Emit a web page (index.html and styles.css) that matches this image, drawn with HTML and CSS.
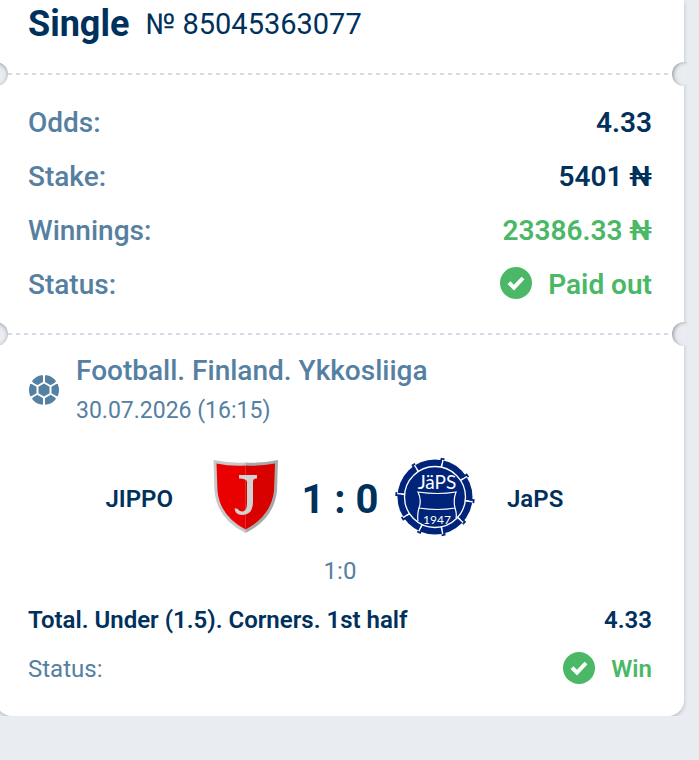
FILE: index.html
```html
<!DOCTYPE html>
<html lang="en">
<head>
<meta charset="utf-8">
<meta name="viewport" content="width=device-width, initial-scale=1">
<title>Bet slip</title>
<link rel="stylesheet" href="styles.css">
</head>
<body>
<main class="ticket">
  <header class="ticket-head">
    <h1 class="kind">Single</h1>
    <span class="number">№ 85045363077</span>
  </header>
  <div class="tear"></div>
  <dl class="summary">
    <div class="row"><dt>Odds:</dt><dd>4.33</dd></div>
    <div class="row"><dt>Stake:</dt><dd>5401 ₦</dd></div>
    <div class="row"><dt>Winnings:</dt><dd class="positive">23386.33 ₦</dd></div>
    <div class="row"><dt>Status:</dt><dd class="positive">
      <svg class="check" viewBox="0 0 32 32" aria-hidden="true"><circle cx="16" cy="16" r="16"/><path d="M9 15.700l5 5L23 11"/></svg>
      Paid out</dd></div>
  </dl>
  <div class="tear"></div>
  <section class="event">
    <div class="league">
      <svg class="sport" viewBox="0 0 32 32" aria-hidden="true">
        <circle class="ball" cx="16" cy="16" r="15"/>
        <path class="seam" d="M16 8.500l6.500 3.750v7.500L16 23.500l-6.500-3.750v-7.500zM16 8.500V0M22.500 12.250L30 8M22.500 19.750L30 24M16 23.500V32M9.500 19.750L2 24M9.500 12.250L2 8"/>
        <path class="dent" d="M14 0h4l-2 4zM14 32h4l-2-4zM3 5.500l-2 3.700 5 1zM29 5.500l2 3.700-5 1zM3 26.500l-2-3.700 5-1zM29 26.500l2-3.700-5-1z"/>
      </svg>
      <div>
        <h2 class="league-name">Football. Finland. Ykkosliiga</h2>
        <time class="date">30.07.2026 (16:15)</time>
      </div>
    </div>
    <div class="match">
      <div class="team home">
        <span>JIPPO</span>
        <svg class="crest" viewBox="0 0 80 80" aria-hidden="true">
          <path fill="#c8c8c8" d="M8.500 3Q25 6.500 40.500 5.500V76Q12 62 9.500 34z"/>
          <path fill="#a9a9a9" d="M73 3Q56 6.500 40.500 5.500V76Q69 62 72 34z"/>
          <path fill="#e90000" d="M11.500 6.500Q26 9.500 40.500 8.500V72.500Q15 59 12.500 34z"/>
          <path fill="#d90000" d="M70 6.500Q55 9.500 40.500 8.500V72.500Q66 59 69 34z"/>
          <path fill="#d2d2d2" d="M34 18H52V21.500Q48 21.500 48 25V45Q48 58 37 58Q30 58 29.500 51.500H32Q35 55 38 54.500Q42 54 42 46V25Q42 21.500 34 21.500z"/>
        </svg>
      </div>
      <strong class="score">1 : 0</strong>
      <div class="team away">
        <svg class="crest" viewBox="0 0 80 80" aria-hidden="true">
          <defs>
            <g id="tab">
              <path d="M40 10V0" stroke="#fff" stroke-width="1.600"/>
              <path d="M38.400 6V1.200H41.500" fill="none" stroke="#00247a" stroke-width="1.800"/>
            </g>
          </defs>
          <circle cx="40" cy="40" r="37.500" fill="#00247a"/>
          <circle cx="40" cy="40" r="30.500" fill="none" stroke="#fff" stroke-width="1.300"/>
          <use href="#tab" transform="rotate(12 40 40)"/>
          <use href="#tab" transform="rotate(57 40 40)"/>
          <use href="#tab" transform="rotate(97 40 40)"/>
          <use href="#tab" transform="rotate(132 40 40)"/>
          <use href="#tab" transform="rotate(168 40 40)"/>
          <use href="#tab" transform="rotate(205 40 40)"/>
          <use href="#tab" transform="rotate(237 40 40)"/>
          <use href="#tab" transform="rotate(275 40 40)"/>
          <use href="#tab" transform="rotate(327 40 40)"/>
          <path d="M23 35Q43 38 61 35Q58 43 60 51Q43 54 24 51Q27 43 23 35zM24 51Q22 57 23 64M60 51Q62 57 61 61" fill="none" stroke="#fff" stroke-width="1.200"/>
          <text class="crest-name" x="42" y="32">JäPS</text>
          <text class="crest-year" x="42" y="67">1947</text>
        </svg>
        <span>JaPS</span>
      </div>
    </div>
    <p class="period">1:0</p>
    <div class="bet"><strong>Total. Under (1.5). Corners. 1st half</strong><strong>4.33</strong></div>
    <div class="bet"><span class="label">Status:</span><strong class="outcome positive">
      <svg class="check" viewBox="0 0 32 32" aria-hidden="true"><circle cx="16" cy="16" r="16"/><path d="M9 15.700l5 5L23 11"/></svg>
      Win</strong></div>
  </section>
</main>
</body>
</html>
```
FILE: styles.css
```css
* { box-sizing: border-box; }
body {
  margin: 0;
  background: #e9edf2;
  color: #00315c;
  font-family: Roboto, "Liberation Sans", sans-serif;
  font-size: 24px;
  overflow-x: hidden;
}
h1, h2, p, dl, dd { margin: 0; }
strong { font-weight: 600; }
.ticket {
  margin: 0 15px 0 -4px;
  background: #fff;
  border-radius: 0 0 16px 16px;
  box-shadow: 0 2px 4px #0003;
}
.ticket-head {
  display: flex;
  align-items: center;
  gap: 16px;
  height: 62px;
  padding: 0 32px 14px;
}
.kind { font-size: 36px; line-height: 48px; font-weight: 700; }
.number { font-size: 29px; line-height: 48px; }
.tear {
  display: flex;
  justify-content: space-between;
  align-items: center;
  height: 24px;
  margin: 0 -12px;
  background: repeating-linear-gradient(90deg, #d9dbea 0 4px, #fff 4px 8px) 24px 11px / calc(100% - 48px) 2px no-repeat;
}
.tear::before, .tear::after {
  content: "";
  width: 24px;
  height: 24px;
  border-radius: 12px;
  background: #e9edf2;
  box-shadow: inset 0 1px 4px #0005;
}
.tear::after {
  box-shadow: inset 3px 1px 4px -2px #0006;
  clip-path: inset(0 9px 0 0);
}
.summary { padding: 9px 32px 11px; }
.row {
  display: flex;
  justify-content: space-between;
  align-items: center;
  height: 54px;
  font-size: 28px;
}
dt { color: #5580a1; font-weight: 500; }
dd { font-weight: 600; display: flex; align-items: center; gap: 16px; }
.positive { color: #4ab866; }
.check { width: 32px; height: 32px; margin-bottom: 2px; fill: currentColor; }
.check path { fill: none; stroke: #fff; stroke-width: 4; }
.event { padding: 4px 32px 23px; }
.league { display: flex; align-items: center; gap: 16px; height: 80px; color: #5580a1; }
.sport { width: 32px; height: 32px; }
.ball { fill: currentColor; }
.seam { fill: none; stroke: #fff; stroke-width: 2; }
.dent { fill: #fff; }
.league-name { padding-top: 2px; font-size: 28px; line-height: 40px; font-weight: 500; }
.date { display: block; font-size: 23px; line-height: 40px; }
.match {
  display: grid;
  grid-template-columns: 1fr 110px 1fr;
  align-items: center;
  margin-top: 27px;
}
.team { display: flex; align-items: center; gap: 32px; font-weight: 600; }
.team span { padding-top: 4px; }
.home { justify-content: flex-end; }
.crest { width: 80px; height: 80px; }
.crest-name, .crest-year { fill: #fff; font-family: Lato, sans-serif; font-weight: 400; text-anchor: middle; }
.crest-name { font-size: 19px; }
.crest-year { font-size: 12px; }
.score { padding-top: 4px; font-size: 40px; text-align: center; font-weight: 700; }
.period { margin-top: 14px; line-height: 40px; text-align: center; color: #5580a1; }
.bet { display: flex; justify-content: space-between; align-items: center; height: 49px; }
.period + .bet { margin-top: 4px; }
.label { color: #5580a1; }
.outcome { display: flex; align-items: center; gap: 16px; }
```
